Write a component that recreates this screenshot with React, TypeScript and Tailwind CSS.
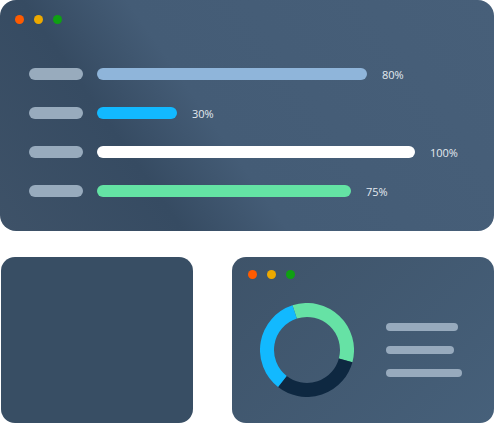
import React from "react";

const rows = [
  { width: 270, color: "bg-[#8fb5da]", label: "80%" },
  { width: 80, color: "bg-[#12b9ff]", label: "30%" },
  { width: 318, color: "bg-white", label: "100%" },
  { width: 254, color: "bg-[#64e3a4]", label: "75%" },
];

function Dots() {
  return (
    <div className="flex gap-[10px]">
      <span className="w-[9px] h-[9px] rounded-full bg-[#ff5b00]" />
      <span className="w-[9px] h-[9px] rounded-full bg-[#eda900]" />
      <span className="w-[9px] h-[9px] rounded-full bg-[#0fa012]" />
    </div>
  );
}

function arc(r: number, a0: number, a1: number) {
  const cx = 47;
  const cy = 47;
  const p = (a: number) => {
    const rad = ((a - 90) * Math.PI) / 180;
    return `${cx + r * Math.cos(rad)} ${cy + r * Math.sin(rad)}`;
  };
  const large = a1 - a0 > 180 ? 1 : 0;
  return `M ${p(a0)} A ${r} ${r} 0 ${large} 1 ${p(a1)}`;
}

function Donut() {
  return (
    <svg width="94" height="94" viewBox="0 0 94 94">
      <path d={arc(40, -18, 105)} stroke="#66e2a5" strokeWidth="14" fill="none" />
      <path d={arc(40, 105, 218)} stroke="#0e2841" strokeWidth="14" fill="none" />
      <path d={arc(40, 218, 342)} stroke="#12b9ff" strokeWidth="14" fill="none" />
    </svg>
  );
}

export default function App() {
  return (
    <div
      className="w-[494px] h-[423px] overflow-hidden bg-white"
      style={{ fontFamily: "'Open Sans', sans-serif" }}
    >
      <div className="h-[231px] rounded-[16px] bg-[linear-gradient(55deg,#3e5268_0%,#364b62_28%,#445c76_44%,#475f79_100%)] pt-[15px] pl-[15px]">
        <Dots />
        <div className="mt-[44px] ml-[14px] flex flex-col gap-[27px]">
          {rows.map((r) => (
            <div key={r.label} className="flex items-center h-[12px]">
              <span className="w-[54px] h-[12px] rounded-full bg-[#98abbd]" />
              <span
                className={`ml-[14px] h-[12px] rounded-full ${r.color}`}
                style={{ width: r.width }}
              />
              <span className="ml-[15px] text-[11px] leading-none text-[#e3e9ef]">
                {r.label}
              </span>
            </div>
          ))}
        </div>
      </div>

      <div className="mt-[26px] flex">
        <div className="ml-[1px] w-[192px] h-[166px] rounded-[14px] bg-[#384e64]" />
        <div className="ml-auto w-[262px] h-[166px] rounded-[14px] bg-[linear-gradient(135deg,#3e5369_0%,#46607a_100%)] pt-[13px] pl-[16px]">
          <Dots />
          <div className="mt-[24px] ml-[12px] flex items-center">
            <Donut />
            <div className="ml-[32px] flex flex-col gap-[15px]">
              <span className="w-[72px] h-[8px] rounded-full bg-[#97aabd]" />
              <span className="w-[68px] h-[8px] rounded-full bg-[#97aabd]" />
              <span className="w-[76px] h-[8px] rounded-full bg-[#97aabd]" />
            </div>
          </div>
        </div>
      </div>
    </div>
  );
}
